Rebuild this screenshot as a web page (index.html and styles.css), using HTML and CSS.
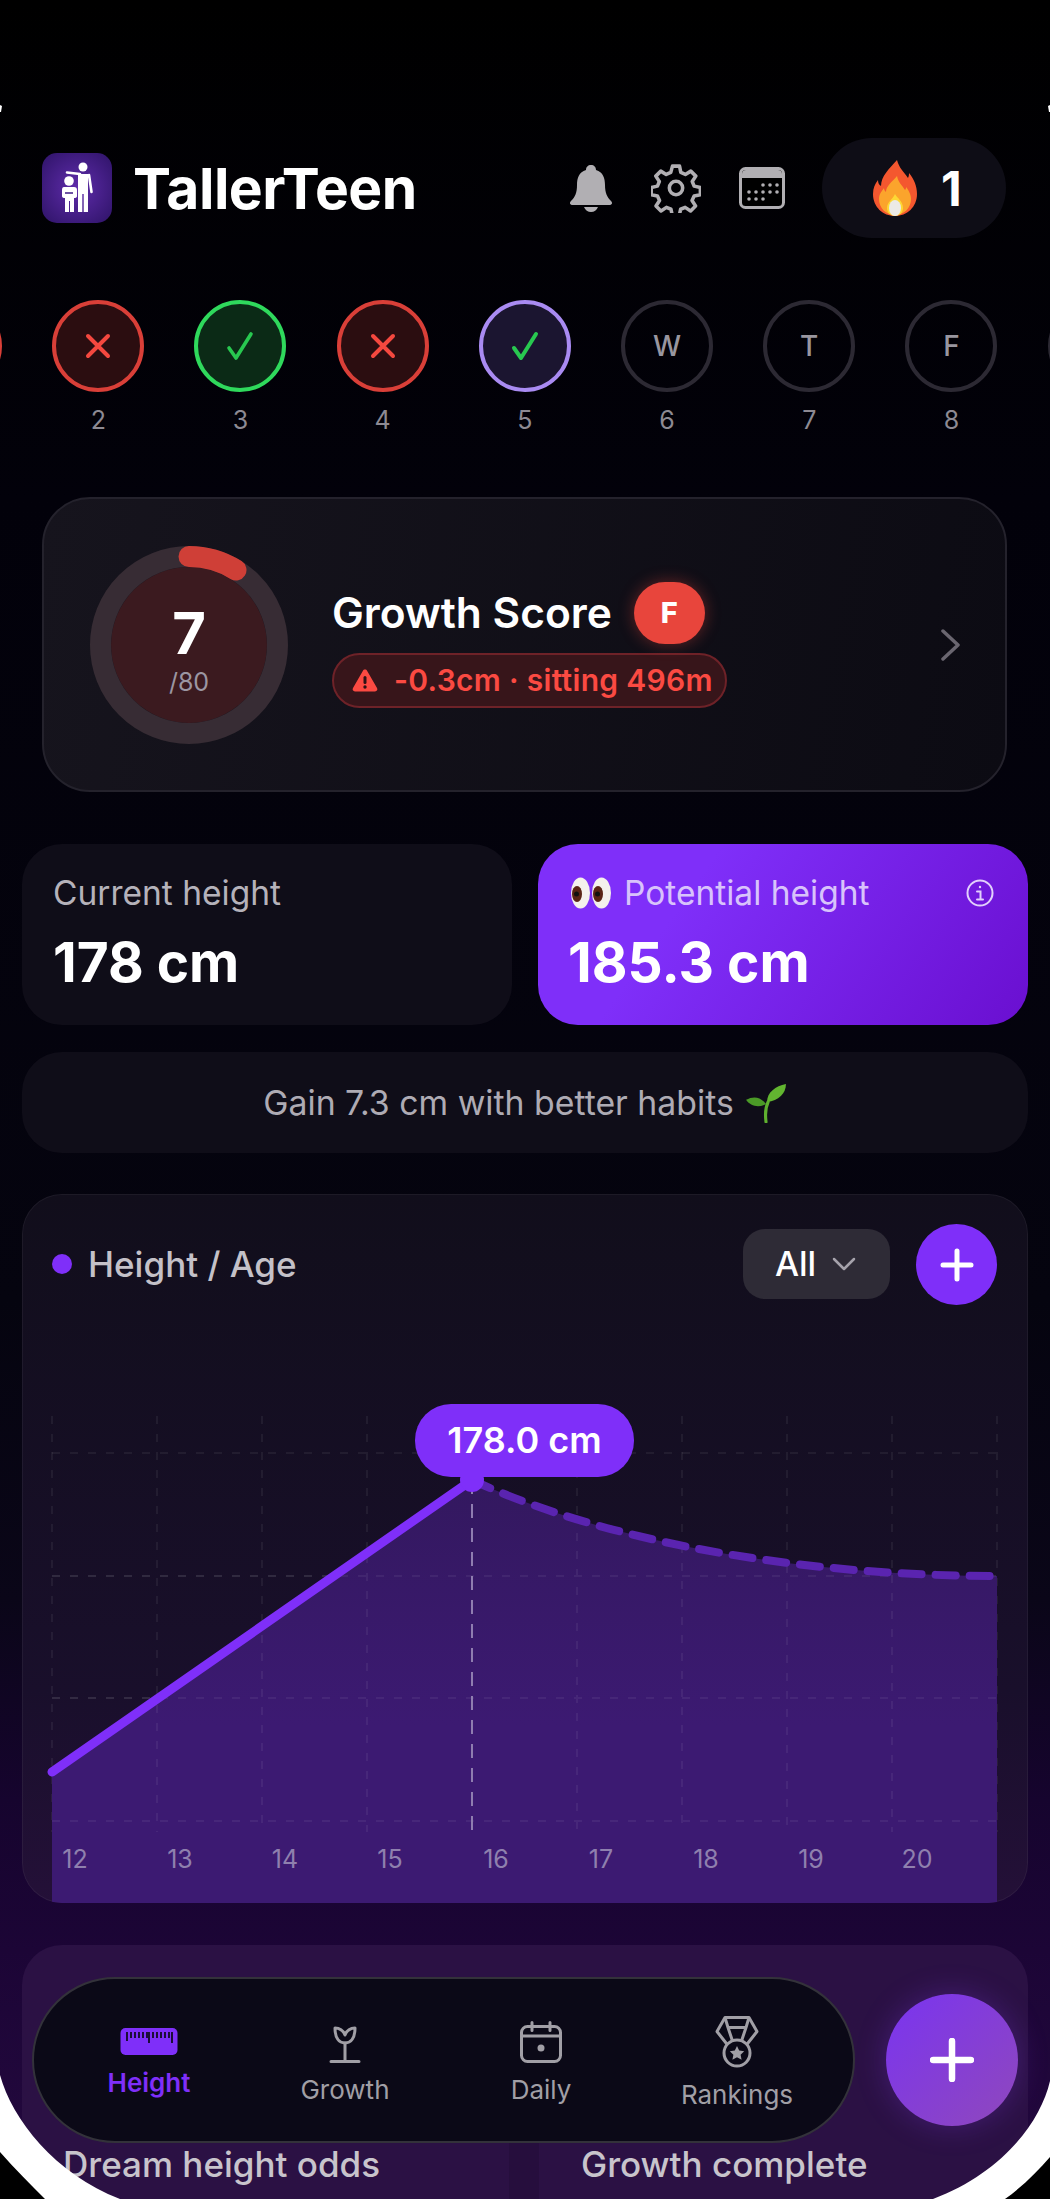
FILE: index.html
```html
<!DOCTYPE html>
<html lang="en">
<head>
    <meta charset="UTF-8">
    <meta name="viewport" content="width=device-width, initial-scale=1.0">
    <title>TallerTeen</title>
    <link rel="stylesheet" href="styles.css">
</head>
<body>
    <div class="screen">
        <header class="top-bar">
            <div class="logo">
                <svg width="70" height="70" viewBox="0 0 70 70" fill="#fff" stroke="#fff">
                    <circle cx="41" cy="14" r="4.500" stroke="none"/>
                    <path d="M36 21h10v20h-10zM36 41h4.300v18h-4.300zM41.700 41h4.300v18h-4.300z" stroke="none"/>
                    <path d="M47 22l2.500 17M38 21l-13-1.500" stroke-width="2.600" stroke-linecap="round" fill="none"/>
                    <circle cx="27" cy="28" r="4.800" stroke="none"/>
                    <path d="M22 34h10q3 0 3 3v6q0 2-3 2v14h-4V48h-1v11h-4V45q-3 0-3-2v-6q0-3 2-3z" stroke="none"/>
                    <path d="M23 40h8" stroke="#3d1a84" stroke-width="1.500" fill="none"/>
                </svg>
            </div>
            <h1 class="app-name">TallerTeen</h1>
            <div class="top-icons">
                <svg width="44" height="48" viewBox="0 0 44 48">
                    <path d="M22 1c3 0 5 2 5 5 7 2 9 8 9 15 0 8 2 12 6 16 2 2 1 4-2 4H4c-3 0-4-2-2-4 4-4 6-8 6-16 0-7 2-13 9-15 0-3 2-5 5-5z" fill="#b1afb3"/>
                    <path d="M15 43h14c-1 3-4 5-7 5s-6-2-7-5z" fill="#b1afb3"/>
                </svg>
                <svg width="50" height="50" viewBox="0 0 24 24" fill="none" stroke="#b1afb3" stroke-width="1.700" stroke-linejoin="round">
                    <circle cx="12" cy="12" r="3.200"/>
                    <path d="M10.300 1.500h3.400l.6 3 2.200 1 2.600-1.600 2.400 2.400-1.700 2.600.9 2.200 3 .7v3.400l-3 .6-1 2.200 1.700 2.600-2.400 2.400-2.600-1.700-2.200.9-.6 3h-3.400l-.6-3-2.200-.9-2.600 1.700-2.400-2.400 1.700-2.600-1-2.200-3-.6v-3.400l3-.7.9-2.200-1.700-2.600 2.400-2.400 2.600 1.600 2.200-1z"/>
                </svg>
                <svg width="46" height="42" viewBox="0 0 46 42">
                    <rect x="1.500" y="1.500" width="43" height="39" rx="5" fill="#000" stroke="#b1afb3" stroke-width="3"/>
                    <path d="M3 7q0-4 4-4h32q4 0 4 4v4H3z" fill="#b1afb3"/>
                    <g fill="#b1afb3">
                        <circle cx="24" cy="18" r="1.800"/><circle cx="31" cy="18" r="1.800"/><circle cx="38" cy="18" r="1.800"/>
                        <circle cx="10" cy="25" r="1.800"/><circle cx="17" cy="25" r="1.800"/><circle cx="24" cy="25" r="1.800"/><circle cx="31" cy="25" r="1.800"/><circle cx="38" cy="25" r="1.800"/>
                        <circle cx="10" cy="32" r="1.800"/><circle cx="17" cy="32" r="1.800"/><circle cx="24" cy="32" r="1.800"/>
                    </g>
                </svg>
            </div>
            <div class="streak">
                <svg width="44" height="56" viewBox="0 0 44 56">
                    <path d="M24 0c2 8 7 12 11 18 1-2 1-4 1-5 5 6 8 13 8 21 0 13-10 22-22 22S0 47 0 34c0-6 2-10 5-14 0 3 1 5 3 6C8 16 16 9 24 0z" fill="#f4572f"/>
                    <path d="M24 16c1 6 5 9 8 14 1-1 1-2 1-3 4 5 5 9 5 12 0 9-7 16-16 16S6 48 6 39c0-5 3-8 5-11 0 2 1 3 2 4 0-6 6-10 11-16z" fill="#fba42c"/>
                    <path d="M22 34c2 4 8 7 8 14 0 5-4 8-8 8s-8-3-8-8c0-6 6-9 8-14z" fill="#fdd835"/>
                    <ellipse cx="22" cy="48" rx="6" ry="8" fill="#eceae6"/>
                </svg>
                <span class="streak-count">1</span>
            </div>
        </header>

        <div class="days">
            <div class="day"><div class="day-circle miss"></div></div>
            <div class="day">
                <div class="day-circle miss">
                    <svg width="30" height="30" viewBox="0 0 30 30"><path d="M5 5l20 20M25 5L5 25" stroke="#f4483f" stroke-width="4" stroke-linecap="round"/></svg>
                </div>
                <span>2</span>
            </div>
            <div class="day">
                <div class="day-circle done">
                    <svg width="30" height="30" viewBox="0 0 30 30" fill="none"><path d="M4 17l7 10L26 3" stroke="#28c850" stroke-width="3.600" stroke-linecap="round" stroke-linejoin="round"/></svg>
                </div>
                <span>3</span>
            </div>
            <div class="day">
                <div class="day-circle miss">
                    <svg width="30" height="30" viewBox="0 0 30 30"><path d="M5 5l20 20M25 5L5 25" stroke="#f4483f" stroke-width="4" stroke-linecap="round"/></svg>
                </div>
                <span>4</span>
            </div>
            <div class="day">
                <div class="day-circle today">
                    <svg width="30" height="30" viewBox="0 0 30 30" fill="none"><path d="M4 17l7 10L26 3" stroke="#28c850" stroke-width="4" stroke-linecap="round" stroke-linejoin="round"/></svg>
                </div>
                <span>5</span>
            </div>
            <div class="day"><div class="day-circle">W</div><span>6</span></div>
            <div class="day"><div class="day-circle">T</div><span>7</span></div>
            <div class="day"><div class="day-circle">F</div><span>8</span></div>
            <div class="day"><div class="day-circle"></div></div>
        </div>

        <section class="score-card">
            <div class="ring">
                <svg width="198" height="198" viewBox="0 0 198 198" fill="none">
                    <circle cx="99" cy="99" r="78" fill="#3b1a1f"/>
                    <circle cx="99" cy="99" r="88.500" stroke="#372c34" stroke-width="21"/>
                    <path d="M99 10.500A88.500 88.500 0 0 1 146 24" stroke="#cf3f37" stroke-width="21" stroke-linecap="round"/>
                </svg>
                <div class="ring-text">
                    <strong>7</strong>
                    <span>/80</span>
                </div>
            </div>
            <div class="score-info">
                <div class="score-title">
                    <h2>Growth Score</h2>
                    <span class="grade">F</span>
                </div>
                <div class="score-alert">
                    <svg width="26" height="24" viewBox="0 0 26 24">
                        <path d="M13 1.500c1 0 1.700.5 2.200 1.400l9.800 17.200c1 1.700-.1 3.400-2 3.400H3c-1.900 0-3-1.700-2-3.400L10.800 2.900c.5-.9 1.200-1.400 2.200-1.400z" fill="#fb4a42"/>
                        <rect x="11.500" y="8" width="3" height="8" rx="1.500" fill="#2c1216"/>
                        <circle cx="13" cy="19" r="1.700" fill="#2c1216"/>
                    </svg>
                    -0.3cm · sitting 496m
                </div>
            </div>
            <svg class="chevron" width="22" height="32" viewBox="0 0 22 32" fill="none"><path d="M3 2l15 14L3 30" stroke="#6a6670" stroke-width="3.500" stroke-linecap="round" stroke-linejoin="round"/></svg>
        </section>

        <div class="stats">
            <div class="stat-card">
                <div class="stat-label">Current height</div>
                <div class="stat-value">178 cm</div>
            </div>
            <div class="stat-card potential">
                <div class="stat-label">
                    <svg class="eyes" width="40" height="32" viewBox="0 0 40 32">
                        <ellipse cx="9.500" cy="16" rx="9.500" ry="15.500" fill="#f4f1ec"/>
                        <ellipse cx="30.500" cy="16" rx="9.500" ry="15.500" fill="#f4f1ec"/>
                        <ellipse cx="6" cy="17" rx="5" ry="8" fill="#5a2416"/>
                        <ellipse cx="27" cy="17" rx="5" ry="8" fill="#5a2416"/>
                        <circle cx="5.500" cy="17" r="2.500" fill="#111"/>
                        <circle cx="26.500" cy="17" r="2.500" fill="#111"/>
                    </svg>
                    Potential height
                    <svg class="info" width="28" height="28" viewBox="0 0 28 28" fill="none" stroke="#e2d0fc" stroke-width="2">
                        <circle cx="14" cy="14" r="12.500"/>
                        <path d="M11 12.500h3.500V20M11 20.500h6" stroke-linecap="round"/>
                        <circle cx="14" cy="8" r="1.200" fill="#e2d0fc" stroke="none"/>
                    </svg>
                </div>
                <div class="stat-value">185.3 cm</div>
            </div>
        </div>

        <div class="gain-banner">
            Gain 7.3 cm with better habits
            <svg width="42" height="40" viewBox="0 0 40 38" fill="none">
                <path d="M20 37c-1-8-1-13 2-19" stroke="#5fb02f" stroke-width="3" stroke-linecap="round"/>
                <path d="M21 18c0-9 8-15 18-17 0 9-7 16-18 17z" fill="#62b530"/>
                <path d="M20 20C15 13 8 12 1 16c4 6 12 8 19 4z" fill="#4b9a27"/>
            </svg>
        </div>

        <section class="chart-card">
            <div class="chart-head">
                <span class="chart-dot"></span>
                <h3>Height / Age</h3>
                <button class="range-btn">All
                    <svg width="24" height="14" viewBox="0 0 24 14" fill="none"><path d="M2 2l10 10L22 2" stroke="#a5a2ab" stroke-width="2.500" stroke-linecap="round" stroke-linejoin="round"/></svg>
                </button>
                <button class="add-btn">
                    <svg width="34" height="34" viewBox="0 0 34 34"><path d="M17 3v28M3 17h28" stroke="#fff" stroke-width="5" stroke-linecap="round"/></svg>
                </button>
            </div>
            <svg class="chart" width="1006" height="598" viewBox="0 0 1006 598" fill="none">
                <defs>
                    <linearGradient id="area" x1="0" y1="175" x2="0" y2="420" gradientUnits="userSpaceOnUse">
                        <stop offset="0" stop-color="#33185f"/>
                        <stop offset="1" stop-color="#3c1a72"/>
                    </linearGradient>
                </defs>
                <g class="grid">
                    <path d="M30 111v416M135 111v416M240 111v416M345 111v416M555 111v416M660 111v416M765 111v416M870 111v416M975 111v416"/>
                    <path d="M30 148h945M30 271h945M30 393h945M30 516h945"/>
                </g>
                <path d="M30 467L450 175C590 240 790 271 975 271V598H30z" fill="url(#area)"/>
                <path class="grid" d="M30 271h945M30 393h945M30 516h945M135 400v127M240 330v197M345 250v277M555 210v317M660 240v287M765 260v267M870 270v257"/>
                <path d="M450 175v352" stroke="#8f7db0" stroke-width="2" stroke-dasharray="14 10"/>
                <path d="M450 175C590 240 790 271 975 271" stroke="#5a24b0" stroke-width="8" stroke-dasharray="20 14" stroke-linecap="round"/>
                <path d="M30 467L450 175" stroke="#7f2ff9" stroke-width="9" stroke-linecap="round"/>
                <circle cx="450" cy="175" r="12" fill="#7f2ff9"/>
                <g class="ticks">
                    <text x="53" y="563">12</text>
                    <text x="158" y="563">13</text>
                    <text x="263" y="563">14</text>
                    <text x="368" y="563">15</text>
                    <text x="474" y="563">16</text>
                    <text x="579" y="563">17</text>
                    <text x="684" y="563">18</text>
                    <text x="789" y="563">19</text>
                    <text x="895" y="563">20</text>
                </g>
            </svg>
            <div class="tooltip">178.0 cm</div>
        </section>

        <div class="odds">
            <div class="odds-card">Dream height odds</div>
            <div class="odds-card">Growth complete</div>
        </div>

        <nav class="tab-bar">
            <a class="tab active">
                <svg width="58" height="28" viewBox="0 0 58 28">
                    <rect x="0.500" y="0" width="57" height="27" rx="5" fill="#7f2ff9"/>
                    <path d="M7 4v9M11 4v6M15 4v6M19 4v6M23 4v6M27 4v6M29 4v11M33 4v6M37 4v6M41 4v6M45 4v6M49 4v6M52 4v11" stroke="#0b0917" stroke-width="1.700"/>
                </svg>
                Height
            </a>
            <a class="tab tab-growth">
                <svg width="34" height="37" viewBox="0 0 34 37" fill="none" stroke="#a19fa6" stroke-width="3" stroke-linecap="round" stroke-linejoin="round">
                    <path d="M17 17v18M3 35.500h28"/>
                    <path d="M17 17c-6 0-10-5-10-15 4 0 8 2 10 7 2-5 6-7 10-7 0 10-4 15-10 15z"/>
                </svg>
                Growth
            </a>
            <a class="tab">
                <svg width="42" height="42" viewBox="0 0 42 42" fill="none" stroke="#a19fa6" stroke-width="3" stroke-linecap="round">
                    <rect x="1.500" y="5.500" width="39" height="35" rx="6"/>
                    <path d="M1.500 15h39M12 1.500v8M30 1.500v8"/>
                    <circle cx="21" cy="27" r="3.500" fill="#a19fa6" stroke="none"/>
                </svg>
                Daily
            </a>
            <a class="tab">
                <svg width="44" height="52" viewBox="0 0 44 52" fill="none" stroke="#a19fa6" stroke-width="3" stroke-linejoin="round">
                    <path d="M10 1.500h24l8 14-11 14H13L2 15.500z"/>
                    <path d="M10 1.500l3 10h18l3-10M13 11.500l6 18M31 11.500l-6 18"/>
                    <circle cx="22" cy="37" r="13" fill="#0b0917"/>
                    <path d="M22 30l2.200 4.600 5 .6-3.600 3.500 1 5-4.600-2.500-4.600 2.500 1-5-3.600-3.500 5-.6z" fill="#a19fa6" stroke="none"/>
                </svg>
                Rankings
            </a>
        </nav>
        <button class="fab">
            <svg width="44" height="44" viewBox="0 0 44 44"><path d="M22 3v38M3 22h38" stroke="#fff" stroke-width="6.500" stroke-linecap="round"/></svg>
        </button>

        <!-- rounded corners of the device frame -->
        <svg class="frame" width="1050" height="2199" viewBox="0 0 1050 2199">
            <path d="M0 105l2 1-1 6-1 0z" fill="#fff"/>
            <path d="M1050 105l-2 1 1 6 1 0z" fill="#fff"/>
            <path d="M0 2075C12 2119 55 2174 120 2199H0z" fill="#fff"/>
            <path d="M1050 2081C1040 2124 1000 2174 933 2199H1050z" fill="#fff"/>
            <path d="M0 2152C15 2169 30 2184 45 2199H0z" fill="#000"/>
            <path d="M1050 2157C1037 2172 1022 2187 1005 2199H1050z" fill="#000"/>
        </svg>
    </div>
</body>
</html>
```

FILE: styles.css
```css
* {
    box-sizing: border-box;
}
body {
    margin: 0;
    font-family: Inter, "Liberation Sans", sans-serif;
    background-color: #000;
}
h1, h2, h3 {
    margin: 0;
}
button {
    border: none;
    font-family: inherit;
    cursor: pointer;
}
.screen {
    position: relative;
    width: 1050px;
    height: 2199px;
    overflow: hidden;
    padding-top: 138px;
    background: linear-gradient(#000 0, #02010a 500px, #05040f 1300px, #0a0618 1600px, #16042e 1800px, #1c0536 1950px, #24093f 100%);
}
.top-bar {
    display: flex;
    align-items: center;
    height: 100px;
    padding: 0 44px 0 42px;
}
.logo {
    width: 70px;
    height: 70px;
    margin: 0 21px 0 0;
    border-radius: 15px;
    background: radial-gradient(circle, #5f2cab, #2e1367);
}
.logo svg {
    display: block;
}
.app-name {
    color: #fff;
    font-size: 57px;
    font-weight: 700;
    letter-spacing: -0.5px;
}
.top-icons {
    display: flex;
    align-items: center;
    gap: 38px;
    margin-left: auto;
    margin-right: 37px;
}
.streak {
    display: flex;
    align-items: center;
    gap: 24px;
    width: 184px;
    height: 100px;
    padding-left: 51px;
    border-radius: 50px;
    background: #0e0d16;
}
.streak-count {
    color: #fff;
    font-size: 48px;
    font-weight: 700;
}
.days {
    display: flex;
    margin: 62px 0 0 -115px;
}
.day {
    flex: 0 0 142.200px;
    display: flex;
    flex-direction: column;
    align-items: center;
    gap: 14px;
    height: 134px;
    color: #8d8a93;
    font-size: 25px;
    line-height: 28px;
}
.day-circle {
    flex: none;
    display: flex;
    align-items: center;
    justify-content: center;
    width: 92px;
    height: 92px;
    border: 4px solid #2c2933;
    border-radius: 50%;
    color: #99969f;
    font-size: 28px;
    font-weight: 500;
}
.day-circle.miss {
    border-color: #d93f38;
    background: #2b0d10;
}
.day-circle.done {
    border-color: #2fd95c;
    background: #0b2a16;
}
.day-circle.today {
    border-color: #a98bf2;
    background: #1b1530;
}
.score-card {
    display: flex;
    align-items: center;
    height: 295px;
    margin: 63px 43px 0 42px;
    padding: 0 43px 0 46px;
    border: 2px solid #24222c;
    border-radius: 48px;
    background: linear-gradient(100deg, #16141d, #0c0b13);
}
.ring {
    position: relative;
    flex: 0 0 198px;
    height: 198px;
}
.ring svg {
    display: block;
}
.ring-text {
    position: absolute;
    inset: 0;
    display: flex;
    flex-direction: column;
    align-items: center;
    justify-content: center;
    padding-top: 8px;
    color: #9b96a2;
    font-size: 25px;
}
.ring-text strong {
    color: #fff;
    font-size: 58px;
    line-height: 64px;
}
.ring-text span {
    margin-top: 2px;
    line-height: 30px;
}
.score-info {
    margin-left: 44px;
}
.score-title {
    display: flex;
    align-items: center;
    gap: 22px;
}
.score-title h2 {
    color: #fff;
    font-size: 42.500px;
    font-weight: 600;
}
.grade {
    display: flex;
    align-items: center;
    justify-content: center;
    width: 71px;
    height: 62px;
    border-radius: 31px;
    background: #e8453c;
    box-shadow: 0 0 16px rgba(232, 69, 60, 0.4);
    color: #fff;
    font-size: 29px;
    font-weight: 800;
}
.score-alert {
    display: flex;
    align-items: center;
    gap: 16px;
    width: 395px;
    height: 55px;
    margin-top: 9px;
    padding-left: 18px;
    border: 2px solid #6e2228;
    border-radius: 28px;
    background: #37151a;
    color: #fb4a42;
    font-size: 30px;
    font-weight: 600;
    letter-spacing: 0.3px;
    white-space: nowrap;
}
.chevron {
    margin-left: auto;
}
.stats {
    display: grid;
    grid-template-columns: 1fr 1fr;
    gap: 26px;
    margin: 52px 22px 0;
}
.stat-card {
    height: 181px;
    padding: 29px 31px 0;
    border-radius: 40px;
    background: #0f0d18;
}
.stat-card.potential {
    padding-left: 33px;
    background: linear-gradient(125deg, #7f2ff9 30%, #6a0fd0 100%);
}
.stat-label {
    display: flex;
    align-items: center;
    height: 40px;
    color: #b5b2ba;
    font-size: 33.500px;
}
.potential .stat-label {
    color: #d8c3fb;
}
.eyes {
    margin-right: 13px;
}
.info {
    margin-left: auto;
    margin-right: 3px;
}
.stat-value {
    margin-top: 14px;
    color: #fff;
    font-size: 55px;
    font-weight: 700;
    line-height: 70px;
}
.potential .stat-value {
    margin-left: -3px;
}
.gain-banner {
    display: flex;
    align-items: center;
    justify-content: center;
    gap: 11px;
    height: 101px;
    margin: 27px 22px 0;
    border-radius: 40px;
    background: #0f0d18;
    color: #aeabb4;
    font-size: 33.800px;
}
.chart-card {
    position: relative;
    height: 709px;
    margin: 41px 22px 0;
    overflow: hidden;
    border-radius: 40px;
    background: linear-gradient(#110e1b, #190f2b 70%, #241038);
    box-shadow: inset 0 0 0 1px rgba(255, 255, 255, 0.05);
}
.chart-head {
    display: flex;
    align-items: center;
    height: 111px;
    padding: 30px 31px 0 30px;
}
.chart-dot {
    width: 20px;
    height: 20px;
    margin: 0 16px 2px 0;
    border-radius: 50%;
    background: #7f2ff9;
}
.chart-head h3 {
    margin-bottom: 2px;
    color: #c4c1c8;
    font-size: 35px;
    font-weight: 500;
}
.range-btn {
    display: flex;
    align-items: center;
    justify-content: center;
    gap: 16px;
    width: 147px;
    height: 70px;
    margin: 0 0 2px auto;
    padding-right: 8px;
    border-radius: 22px;
    background: #2e2b36;
    color: #fff;
    font-size: 34px;
    font-weight: 500;
}
.add-btn {
    display: flex;
    align-items: center;
    justify-content: center;
    width: 81px;
    height: 81px;
    margin-left: 26px;
    padding: 0;
    border-radius: 50%;
    background: #7f2ff9;
}
.chart {
    display: block;
}
.grid {
    fill: none;
    stroke: rgba(255, 255, 255, 0.06);
    stroke-width: 2;
    stroke-dasharray: 8 10;
}
.ticks text {
    fill: #8f80ae;
    font-size: 25px;
    text-anchor: middle;
}
.tooltip {
    position: absolute;
    left: 393px;
    top: 210px;
    width: 219px;
    height: 73px;
    border-radius: 36px;
    background: #7f2ff9;
    color: #fff;
    font-size: 36px;
    font-weight: 600;
    line-height: 73px;
    text-align: center;
}
.odds {
    position: relative;
    display: grid;
    grid-template-columns: 1fr 1fr;
    gap: 30px;
    height: 300px;
    margin: 42px 22px 0;
    border-radius: 40px 40px 0 0;
    background: #2b1144;
}
.odds::after {
    content: "";
    position: absolute;
    left: 487px;
    top: 190px;
    bottom: 0;
    width: 30px;
    background: #260e3d;
}
.odds-card {
    padding: 198px 41px 0;
    color: #c8c4cc;
    font-size: 35px;
    font-weight: 500;
    line-height: 42px;
    white-space: nowrap;
}
.tab-bar {
    position: absolute;
    left: 32px;
    top: 1977px;
    display: flex;
    align-items: center;
    width: 823px;
    height: 166px;
    padding: 5px 0 0 17px;
    border: 2px solid #33323a;
    border-radius: 83px;
    background: #0b0917;
}
.tab {
    flex: 0 0 196px;
    display: flex;
    flex-direction: column;
    align-items: center;
    gap: 12px;
    color: #a19fa6;
    font-size: 26px;
    line-height: 30px;
}
.tab-growth {
    margin-top: 5px;
}
.tab.active {
    color: #7f2ff9;
    font-weight: 600;
}
.fab {
    position: absolute;
    left: 886px;
    top: 1994px;
    display: flex;
    align-items: center;
    justify-content: center;
    width: 132px;
    height: 132px;
    padding: 0;
    border-radius: 50%;
    background: linear-gradient(135deg, #7a34f0, #8f48bc);
    box-shadow: 0 0 30px rgba(125, 55, 230, 0.3);
}
.frame {
    position: absolute;
    left: 0;
    top: 0;
    pointer-events: none;
}
```
